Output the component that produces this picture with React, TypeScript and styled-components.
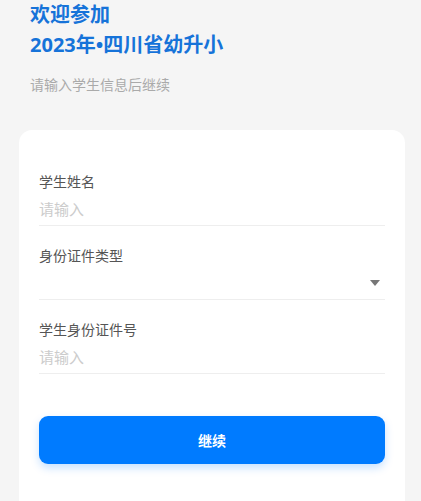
import React from "react";
import styled, { createGlobalStyle } from "styled-components";

const Global = createGlobalStyle`
  html, body { margin: 0; padding: 0; background: #f5f5f5; }
  body { font-family: "Noto Sans CJK SC", "Noto Sans", sans-serif; }
  * { box-sizing: border-box; }
`;

const Page = styled.div`
  height: 501px;
  overflow: hidden;
  background: #f5f5f5;
  display: flex;
  flex-direction: column;
`;

const Header = styled.div`
  padding: 0 0 0 30px;
  display: flex;
  flex-direction: column;
`;

const Title = styled.h1`
  margin: 0;
  font-family: "Noto Sans", "Noto Sans CJK SC", sans-serif;
  font-size: 20px;
  line-height: 30px;
  font-weight: 700;
  color: #1673d9;
`;

const Subtitle = styled.p`
  margin: 14px 0 0;
  font-size: 14px;
  line-height: 20px;
  color: #aaaaaa;
`;

const Card = styled.div`
  margin: 36px 16px 0 19px;
  flex: 1;
  background: #ffffff;
  border-radius: 13px 13px 0 0;
  padding: 41px 20px 0 20px;
  display: flex;
  flex-direction: column;
`;

const Field = styled.div`
  display: flex;
  flex-direction: column;
  border-bottom: 1px solid #eeeeee;
  margin-bottom: 19px;
`;

const Label = styled.div`
  font-size: 14px;
  line-height: 20px;
  color: #555555;
`;

const Value = styled.div`
  height: 34px;
  padding: 8px 0 6px;
  display: flex;
  align-items: center;
  justify-content: space-between;
  font-size: 15px;
  line-height: 20px;
  color: #cccccc;
`;

const Arrow = styled.span`
  margin-right: 5px;
  width: 0;
  height: 0;
  border-left: 5px solid transparent;
  border-right: 5px solid transparent;
  border-top: 6px solid #777777;
`;

const Button = styled.button`
  margin-top: 23px;
  height: 48px;
  border: none;
  border-radius: 9px;
  background: #007bff;
  color: #ffffff;
  font-family: inherit;
  font-size: 14px;
  font-weight: 700;
  box-shadow: 0 4px 8px rgba(0, 123, 255, 0.22);
`;

export default function App() {
  return (
    <Page>
      <Global />
      <Header>
        <Title>
          欢迎参加
          <br />
          2023年•四川省幼升小
        </Title>
        <Subtitle>请输入学生信息后继续</Subtitle>
      </Header>
      <Card>
        <Field>
          <Label>学生姓名</Label>
          <Value>请输入</Value>
        </Field>
        <Field>
          <Label>身份证件类型</Label>
          <Value>
            <span />
            <Arrow />
          </Value>
        </Field>
        <Field>
          <Label>学生身份证件号</Label>
          <Value>请输入</Value>
        </Field>
        <Button>继续</Button>
      </Card>
    </Page>
  );
}
